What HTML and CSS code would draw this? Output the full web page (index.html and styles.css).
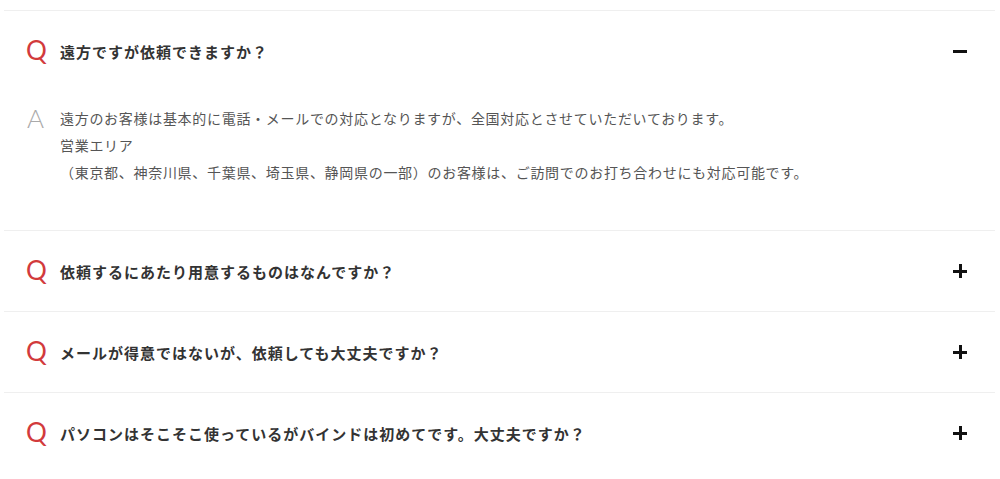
FILE: index.html
```html
<!DOCTYPE html>
<html lang="ja">
<head>
    <meta charset="UTF-8">
    <title>よくある質問</title>
    <link rel="stylesheet" href="styles.css">
</head>
<body>
    <div class="faq">
        <div class="faq-item open">
            <div class="faq-q">
                <span class="mark-q">Q</span>
                <span class="q-text">遠方ですが依頼できますか？</span>
                <span class="toggle"></span>
            </div>
            <div class="faq-a">
                <span class="mark-a">A</span>
                <p class="a-text">遠方のお客様は基本的に電話・メールでの対応となりますが、全国対応とさせていただいております。<br>営業エリア<br>（東京都、神奈川県、千葉県、埼玉県、静岡県の一部）のお客様は、ご訪問でのお打ち合わせにも対応可能です。</p>
            </div>
        </div>
        <div class="faq-item">
            <div class="faq-q">
                <span class="mark-q">Q</span>
                <span class="q-text">依頼するにあたり用意するものはなんですか？</span>
                <span class="toggle"></span>
            </div>
        </div>
        <div class="faq-item">
            <div class="faq-q">
                <span class="mark-q">Q</span>
                <span class="q-text">メールが得意ではないが、依頼しても大丈夫ですか？</span>
                <span class="toggle"></span>
            </div>
        </div>
        <div class="faq-item">
            <div class="faq-q">
                <span class="mark-q">Q</span>
                <span class="q-text">パソコンはそこそこ使っているがバインドは初めてです。大丈夫ですか？</span>
                <span class="toggle"></span>
            </div>
        </div>
    </div>
</body>
</html>
```
FILE: styles.css
```css
*{
    padding:0;
    margin:0;
    box-sizing:border-box;
}
body{
    background:#fff;
    font-family:"Noto Sans CJK JP","Noto Sans",sans-serif;
    color:#333;
}
.faq{
    padding:10px 5px 0 4px;
}
.faq-item{
    border-top:1px solid #efefef;
}
.faq-q{
    display:flex;
    align-items:center;
    height:80px;
    padding:0 28px 0 22px;
}
.mark-q,
.mark-a{
    width:34px;
    flex-shrink:0;
    font-family:Lato,"Noto Sans",sans-serif;
    font-size:26px;
    line-height:1;
}
.mark-q{
    color:#d23a3c;
    margin-top:-2px;
}
.mark-a{
    color:#aaa;
    font-weight:300;
    line-height:27px;
    padding-left:1px;
}
.q-text{
    flex:1;
    font-size:15px;
    font-weight:bold;
    letter-spacing:1px;
    color:#333;
}
.toggle{
    position:relative;
    width:14px;
    height:14px;
}
.toggle::before,
.toggle::after{
    content:"";
    position:absolute;
    background:#111;
}
.toggle::before{
    left:0;
    top:5.5px;
    width:14px;
    height:3px;
}
.toggle::after{
    left:5.5px;
    top:0;
    width:3px;
    height:14px;
}
.open .toggle::after{
    display:none;
}
.faq-a{
    display:flex;
    align-items:flex-start;
    padding:14px 28px 44px 22px;
}
.a-text{
    font-size:14px;
    line-height:27px;
    letter-spacing:0.7px;
    color:#555;
}
```
